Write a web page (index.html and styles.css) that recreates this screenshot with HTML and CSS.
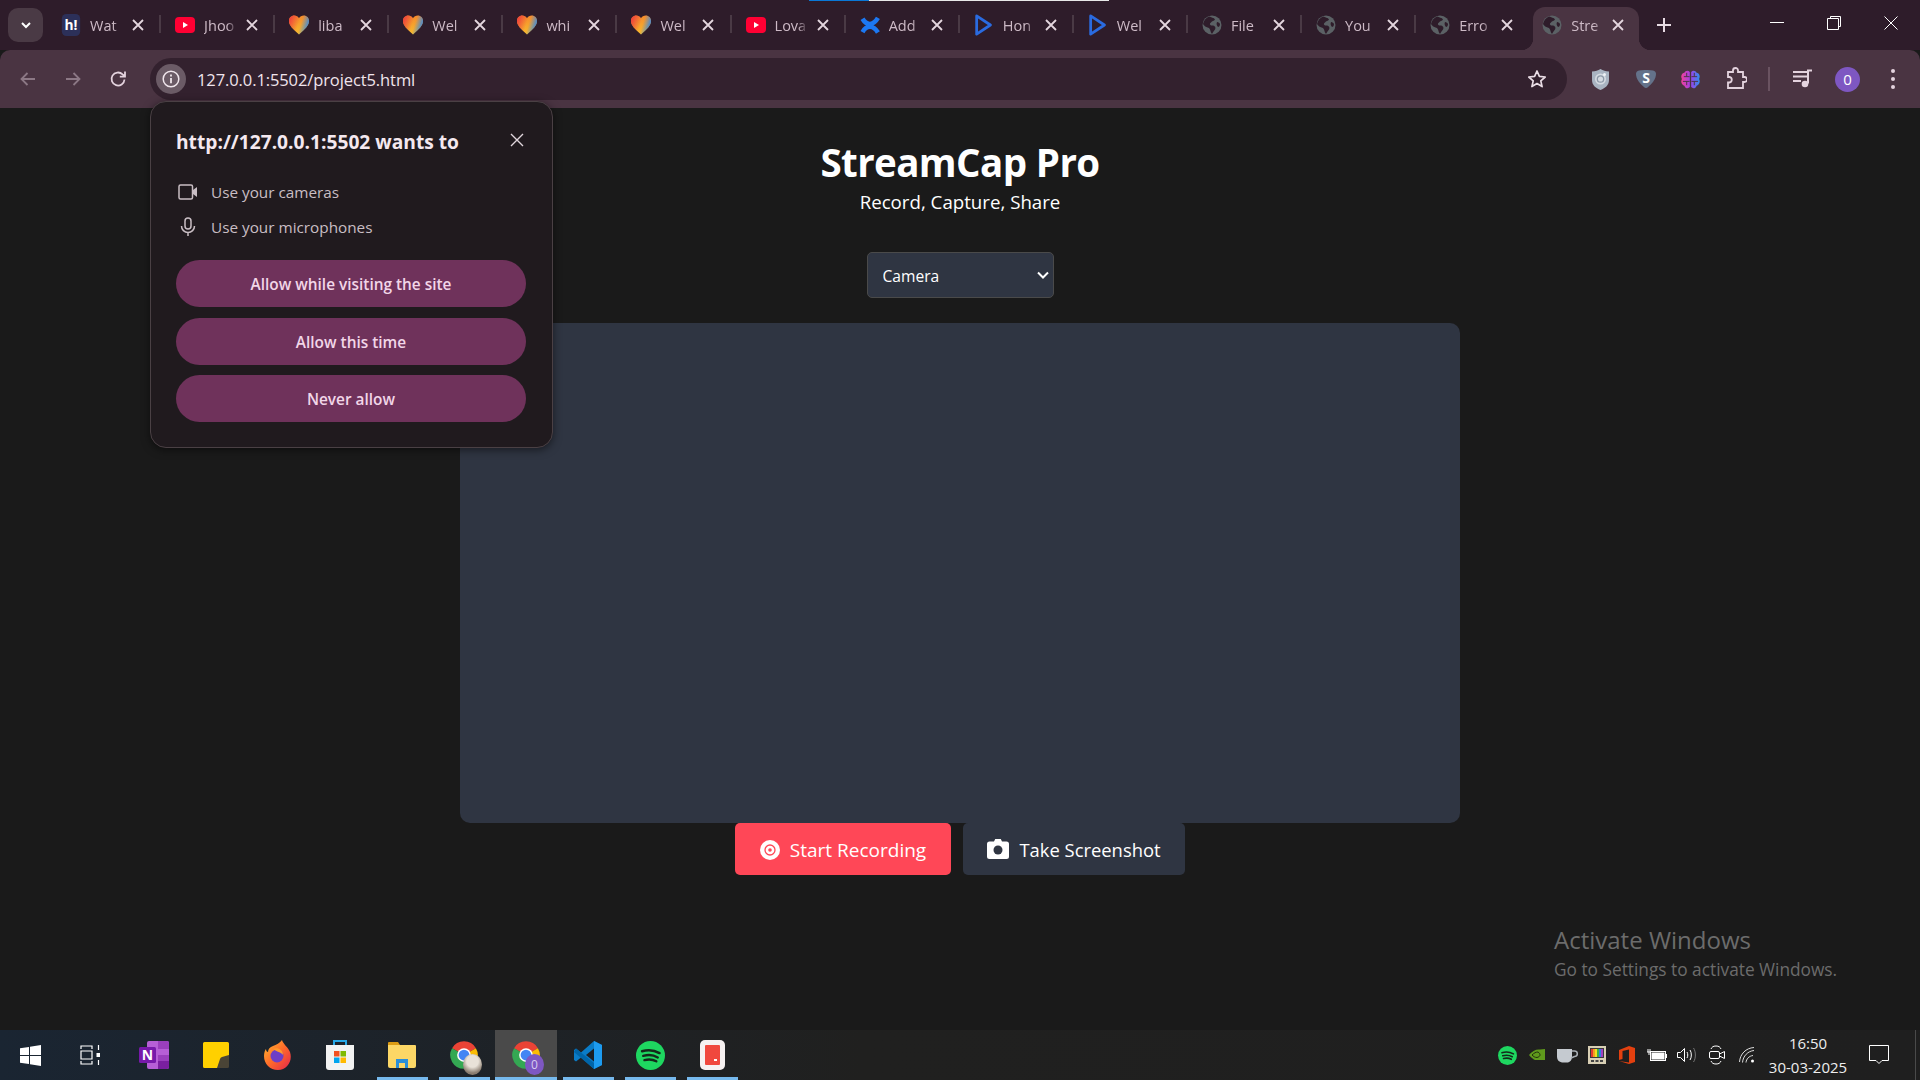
FILE: index.html
```html
<!DOCTYPE html>
<html lang="en">
<head>
    <meta charset="UTF-8">
    <title>StreamCap Pro</title>
    <link rel="stylesheet" href="styles.css">
</head>
<body>
<svg class="defs" width="0" height="0">
    <symbol id="i-x" viewBox="0 0 16 16"><path d="M3 3l10 10M13 3L3 13" fill="none" stroke="currentColor" stroke-width="1.800"/></symbol>
    <symbol id="i-hi" viewBox="0 0 20 24"><rect width="20" height="24" rx="5" fill="#2c3059"/><text x="10" y="17.500" text-anchor="middle" class="svg-bold" font-size="15" fill="#fff">h!</text></symbol>
    <symbol id="i-yt" viewBox="0 0 20 20"><rect y="2" width="20" height="16" rx="4" fill="#ff0033"/><path d="M8 7l5 3-5 3z" fill="#fff"/></symbol>
    <symbol id="i-heart" viewBox="0 0 20 20">
        <defs>
            <linearGradient id="hg" x1="0" y1="0" x2="0" y2="1"><stop offset="0" stop-color="#f58a2c"/><stop offset="1" stop-color="#f7bb2e"/></linearGradient>
            <linearGradient id="hs" x1="0" y1=".2" x2="1" y2=".5"><stop offset="0" stop-color="#ef3f3c"/><stop offset=".5" stop-color="#ef3f3c" stop-opacity="0"/><stop offset=".6" stop-color="#3f8fe0" stop-opacity="0"/><stop offset="1" stop-color="#2f86e6"/></linearGradient>
        </defs>
        <path d="M10 19.500C4 14 0 10.500 0 6 0 2.800 2.300.5 5.300.5 7.200.5 9 1.500 10 3.200 11 1.500 12.800.5 14.700.5 17.700.5 20 2.800 20 6 20 10.500 16 14 10 19.500z" fill="url(#hg)"/>
        <path d="M10 19.500C4 14 0 10.500 0 6 0 2.800 2.300.5 5.300.5 7.200.5 9 1.500 10 3.200 11 1.500 12.800.5 14.700.5 17.700.5 20 2.800 20 6 20 10.500 16 14 10 19.500z" fill="url(#hs)"/>
    </symbol>
    <symbol id="i-conf" viewBox="0 0 24 24"><path d="M3 4.500C8 13 16 13 21.500 3.500M3 20.500C8 12 16 12 21.500 21" fill="none" stroke="#1c78f2" stroke-width="5.500"/></symbol>
    <symbol id="i-play" viewBox="0 0 20 24"><path d="M2 2l15 10L2 22z" fill="none" stroke="#2a6be0" stroke-width="3" stroke-linejoin="round"/></symbol>
    <symbol id="i-globe" viewBox="0 0 20 20"><circle cx="10" cy="10" r="9.500" fill="#5b6165"/><path d="M7 1.500c2 1 5 1 6 3-1 2-3 1-4 3-2 1-1 3 1 3 3 0 4 2 3 4-1 1-2 3-3 4.500-2-2-1-4-3-6-3-1-5-2-6-4 1-4 3-6 6-7.500zM15 7c1.500 0 2.500 1 3 2 0 2-1 3-2 3-1-1-2-3-1-5z" fill="#2e1c2a"/></symbol>
    <symbol id="i-chrome" viewBox="0 0 24 24">
        <path d="M12 12L2.470 6.500A11 11 0 0 1 21.530 6.500Z" fill="#ea4335"/>
        <path d="M12 12L21.530 6.500A11 11 0 0 1 12 23Z" fill="#fbbc04"/>
        <path d="M12 12L12 23A11 11 0 0 1 2.470 6.500Z" fill="#34a853"/>
        <circle cx="12" cy="12" r="5.500" fill="#fff"/><circle cx="12" cy="12" r="4.300" fill="#4285f4"/>
    </symbol>
    <symbol id="i-spotify" viewBox="0 0 24 24"><circle cx="12" cy="12" r="12" fill="#1ed760"/><path d="M5 8.500c5-1.500 10-1 14.500 1.500M6 12.300c4.500-1.200 8.500-.8 12 1.300M7 15.800c3.500-.9 7-.6 9.800 1" fill="none" stroke="#14291b" stroke-width="2" stroke-linecap="round"/></symbol>
</svg>

<div class="strip">
    <div class="load-line"></div>
    <button class="tab-menu"><svg width="14" height="14" viewBox="0 0 14 14"><path d="M3 5l4 4 4-4" fill="none" stroke="#fff" stroke-width="2"/></svg></button>
    <div class="tabs">
        <div class="tab"><svg class="fav"><use href="#i-hi"/></svg><span class="tab-title">Wat</span><svg class="tab-x"><use href="#i-x"/></svg></div><i class="sep"></i>
        <div class="tab"><svg class="fav"><use href="#i-yt"/></svg><span class="tab-title">Jhoo</span><svg class="tab-x"><use href="#i-x"/></svg></div><i class="sep"></i>
        <div class="tab"><svg class="fav"><use href="#i-heart"/></svg><span class="tab-title">liba</span><svg class="tab-x"><use href="#i-x"/></svg></div><i class="sep"></i>
        <div class="tab"><svg class="fav"><use href="#i-heart"/></svg><span class="tab-title">Wel</span><svg class="tab-x"><use href="#i-x"/></svg></div><i class="sep"></i>
        <div class="tab"><svg class="fav"><use href="#i-heart"/></svg><span class="tab-title">whi</span><svg class="tab-x"><use href="#i-x"/></svg></div><i class="sep"></i>
        <div class="tab"><svg class="fav"><use href="#i-heart"/></svg><span class="tab-title">Wel</span><svg class="tab-x"><use href="#i-x"/></svg></div><i class="sep"></i>
        <div class="tab"><svg class="fav"><use href="#i-yt"/></svg><span class="tab-title">Lova</span><svg class="tab-x"><use href="#i-x"/></svg></div><i class="sep"></i>
        <div class="tab"><svg class="fav"><use href="#i-conf"/></svg><span class="tab-title">Add</span><svg class="tab-x"><use href="#i-x"/></svg></div><i class="sep"></i>
        <div class="tab"><svg class="fav"><use href="#i-play"/></svg><span class="tab-title">Hon</span><svg class="tab-x"><use href="#i-x"/></svg></div><i class="sep"></i>
        <div class="tab"><svg class="fav"><use href="#i-play"/></svg><span class="tab-title">Wel</span><svg class="tab-x"><use href="#i-x"/></svg></div><i class="sep"></i>
        <div class="tab"><svg class="fav"><use href="#i-globe"/></svg><span class="tab-title">File</span><svg class="tab-x"><use href="#i-x"/></svg></div><i class="sep"></i>
        <div class="tab"><svg class="fav"><use href="#i-globe"/></svg><span class="tab-title">You</span><svg class="tab-x"><use href="#i-x"/></svg></div><i class="sep"></i>
        <div class="tab"><svg class="fav"><use href="#i-globe"/></svg><span class="tab-title">Erro</span><svg class="tab-x"><use href="#i-x"/></svg></div>
        <div class="tab active"><svg class="fav"><use href="#i-globe"/></svg><span class="tab-title">Stre</span><svg class="tab-x"><use href="#i-x"/></svg></div>
    </div>
    <button class="new-tab"><svg width="16" height="16" viewBox="0 0 16 16"><path d="M8 1v14M1 8h14" stroke="#e8dce4" stroke-width="2"/></svg></button>
    <div class="win-btns">
        <button class="win-btn"><svg width="14" height="14" viewBox="0 0 14 14"><path d="M0 6.500h14" stroke="#fff"/></svg></button>
        <button class="win-btn"><svg width="14" height="14" viewBox="0 0 14 14"><path d="M3.500 2.500V.5h10v10h-2M.5 2.500h11v11H.5z" fill="none" stroke="#fff"/></svg></button>
        <button class="win-btn"><svg width="14" height="14" viewBox="0 0 14 14"><path d="M.5.5l13 13M13.500.5l-13 13" fill="none" stroke="#fff"/></svg></button>
    </div>
</div>

<div class="toolbar">
    <button class="tb-btn dim"><svg width="20" height="20" viewBox="0 0 20 20"><path d="M17 10H4M9.500 4L3.500 10l6 6" fill="none" stroke="currentColor" stroke-width="1.800"/></svg></button>
    <button class="tb-btn dim"><svg width="20" height="20" viewBox="0 0 20 20"><path d="M3 10h13M10.500 4l6 6-6 6" fill="none" stroke="currentColor" stroke-width="1.800"/></svg></button>
    <button class="tb-btn"><svg width="20" height="20" viewBox="0 0 20 20"><path d="M16.500 10.500A6.500 6.500 0 1 1 14.600 5.400L17 7.500M17 2.500v5.200h-5.200" fill="none" stroke="currentColor" stroke-width="1.800"/></svg></button>
    <div class="omnibox">
        <span class="site-info"><svg width="18" height="18" viewBox="0 0 18 18"><circle cx="9" cy="9" r="7.800" fill="none" stroke="#f0e6ec" stroke-width="1.500"/><path d="M9 8v5.200M9 4.600v1.800" stroke="#f0e6ec" stroke-width="1.800"/></svg></span>
        <span class="url">127.0.0.1:5502/project5.html</span>
        <svg class="star" width="20" height="20" viewBox="0 0 20 20"><path d="M10 2l2.400 5.400 5.800.6-4.400 3.900 1.300 5.700L10 14.600l-5.100 3 1.300-5.700L1.800 8l5.800-.6z" fill="none" stroke="#eadde5" stroke-width="1.700" stroke-linejoin="round"/></svg>
    </div>
    <div class="tb-right">
        <button class="tb-btn"><svg width="17" height="21" viewBox="0 0 17 21"><path d="M8.500 0c2.500 1.500 5 2.200 8.500 2.500V11c0 5-3.500 8-8.500 10C3.500 19 0 16 0 11V2.500C3.500 2.200 6 1.500 8.500 0z" fill="#a9b4c2"/><circle cx="8.500" cy="10" r="5.500" fill="#d5dbe2"/><circle cx="8.500" cy="10" r="3.200" fill="none" stroke="#8d99a8" stroke-width="1.300"/><circle cx="12.500" cy="5.500" r="1.500" fill="#eef2f6"/></svg></button>
        <button class="tb-btn"><svg width="20" height="18" viewBox="0 0 20 18"><path d="M3 .5C7 -.2 13 -.2 17 .5c2 .4 3 1.500 3 3.500 0 5-4 10-8.500 13.500-1 .7-2 .7-3 0C4 14 0 9 0 4 0 2 1 .9 3 .5z" fill="#64728a"/><text x="10" y="13" text-anchor="middle" class="svg-bold" font-size="14" fill="#fff">S</text></svg></button>
        <button class="tb-btn"><svg width="21" height="19" viewBox="0 0 22 20"><defs><linearGradient id="bg" x1="0" x2="1" y1="0" y2="0"><stop offset="0" stop-color="#f0409a"/><stop offset=".5" stop-color="#a040e8"/><stop offset="1" stop-color="#2f8ff0"/></linearGradient></defs><path d="M10.300 2C8.500 0 5.500.5 4.500 3 1.500 3.500.5 7 2 9.500c-1.500 2.500-.5 6 2.500 7 1 3 4 3.500 5.800 1.500zM11.700 2c1.800-2 4.800-1.500 5.800 1 3 .5 4 4 2.500 6.500 1.500 2.500.5 6-2.500 7-1 3-4 3.500-5.800 1.500z" fill="url(#bg)"/><path d="M4 7h6M3 12h7M12 7h6M12 12h7M7 3v4M15 3v4M7 12v4M15 12v4" stroke="#4a3442" stroke-width="1"/></svg></button>
        <button class="tb-btn"><svg width="22" height="24" viewBox="0 0 22 24"><path d="M3 5h5V3.500a2.500 2.500 0 0 1 5 0V5h5v5h1.500a2.500 2.500 0 0 1 0 5H18v6H3v-5.500h1.500a2.800 2.800 0 0 0 0-5.500H3z" fill="none" stroke="currentColor" stroke-width="1.800"/></svg></button>
        <i class="tb-sep"></i>
        <button class="tb-btn"><svg width="22" height="20" viewBox="0 0 22 20"><path d="M1 3h14M1 7.500h14M1 12h8" stroke="currentColor" stroke-width="2"/><path d="M16 14.500V1.500h4" fill="none" stroke="currentColor" stroke-width="2"/><circle cx="13" cy="15" r="3.300" fill="currentColor"/></svg></button>
        <button class="tb-btn"><span class="avatar">0</span></button>
        <button class="tb-btn"><svg width="6" height="22" viewBox="0 0 6 22"><circle cx="3" cy="3" r="2" fill="currentColor"/><circle cx="3" cy="11" r="2" fill="currentColor"/><circle cx="3" cy="19" r="2" fill="currentColor"/></svg></button>
    </div>
</div>

<div class="main">
    <h1 class="title">StreamCap Pro</h1>
    <p class="subtitle">Record, Capture, Share</p>
    <div class="source-wrap">
        <select class="source">
            <option>Camera</option>
            <option>Screen</option>
        </select>
        <svg class="source-arrow" width="12" height="8" viewBox="0 0 12 8"><path d="M1 1.500l5 5 5-5" fill="none" stroke="#fff" stroke-width="2"/></svg>
    </div>
    <div class="video"></div>
    <div class="controls">
        <button class="btn btn-rec"><svg width="20" height="20" viewBox="0 0 20 20"><circle cx="10" cy="10" r="10" fill="#fff"/><circle cx="10" cy="10" r="5" fill="none" stroke="#ff4757" stroke-width="1.300"/><circle cx="10" cy="10" r="1.800" fill="#ff4757"/></svg>Start Recording</button>
        <button class="btn btn-shot"><svg width="22" height="20" viewBox="0 0 22 20"><path d="M7 2.500L8.200 0h5.600L15 2.500h4.500A2.500 2.500 0 0 1 22 5v12.500a2.500 2.500 0 0 1-2.500 2.500h-17A2.500 2.500 0 0 1 0 17.500V5a2.500 2.500 0 0 1 2.500-2.500z" fill="#fff"/><circle cx="11" cy="11" r="4.500" fill="#2f3542"/></svg>Take Screenshot</button>
    </div>

    <div class="activate">
        <div class="activate-head">Activate Windows</div>
        <div class="activate-sub">Go to Settings to activate Windows.</div>
    </div>
</div>

<div class="taskbar">
    <div class="task-left">
        <div class="task-fixed"><svg width="21" height="21" viewBox="0 0 21 21"><path d="M0 3.200L9 1.900v8H0zM10 1.700L21 0v9.900H10zM0 11h9v8.100l-9-1.300zM10 11h11v10l-11-1.700z" fill="#fff"/></svg></div>
        <div class="task-fixed"><svg width="20" height="20" viewBox="0 0 20 20"><path d="M1 4V1h11v3M1 16v3h11v-3M1 6h11v8H1zM18.500 0v5M18.500 15v5" fill="none" stroke="#fff" stroke-width="1.200"/><rect x="16.500" y="8" width="4" height="4" fill="#fff"/></svg></div>
        <div class="task-item"><svg width="30" height="28" viewBox="0 0 30 28"><rect x="8" y="0" width="22" height="28" rx="2" fill="#b65fd6"/><path d="M19 0h9a2 2 0 0 1 2 2v6H19zM19 14h11v6H19z" fill="#9a3fbd"/><path d="M19 20h11v6a2 2 0 0 1-2 2h-9z" fill="#7a1fa0"/><rect y="6" width="17" height="16" rx="1.500" fill="#7719aa"/><text x="8.500" y="19" text-anchor="middle" class="svg-bold" font-size="14" fill="#fff">N</text></svg></div>
        <div class="task-item"><svg width="26" height="26" viewBox="0 0 26 26"><path d="M1.500 0h23A1.500 1.500 0 0 1 26 1.500V15L15 26H1.500A1.500 1.500 0 0 1 0 24.500V1.500A1.500 1.500 0 0 1 1.500 0z" fill="#ffd000"/><path d="M26 13v11.500a1.500 1.500 0 0 1-1.500 1.500H14l3-9a3 3 0 0 1 2-2z" fill="#4a4436"/></svg></div>
        <div class="task-item"><svg width="28" height="30" viewBox="0 0 28 30"><defs><linearGradient id="ff" x1="0" x2="1" y1="0" y2="1"><stop offset="0" stop-color="#ffbd2e"/><stop offset=".5" stop-color="#ff6a2a"/><stop offset="1" stop-color="#e3234c"/></linearGradient></defs><path d="M18 0c1 4 6 7 8 12 3 9-3 18-12 18C6 30 0 24 0 16c0-3 1-6 2-7 0 2 1 3 2 3 0-3 2-5 5-6 3-1 7-3 9-6z" fill="url(#ff)"/><circle cx="13" cy="16" r="6.500" fill="#6e3fc7"/><path d="M9 9c4-2 10 0 10 6-2-3-6-3-10-6z" fill="#ff9a2e"/></svg></div>
        <div class="task-item"><svg width="28" height="30" viewBox="0 0 28 30"><path d="M8 5V1h12v4" fill="none" stroke="#27a8e8" stroke-width="2"/><path d="M0 5h28v22a3 3 0 0 1-3 3H3a3 3 0 0 1-3-3z" fill="#f2f2f2"/><rect x="8" y="11" width="5.500" height="5.500" fill="#f25022"/><rect x="14.500" y="11" width="5.500" height="5.500" fill="#7fba00"/><rect x="8" y="17.500" width="5.500" height="5.500" fill="#00a4ef"/><rect x="14.500" y="17.500" width="5.500" height="5.500" fill="#ffb900"/></svg></div>
        <div class="task-item running"><svg width="28" height="26" viewBox="0 0 28 26"><path d="M0 1a1 1 0 0 1 1-1h9l2 3h0H0z" fill="#dc9c14"/><path d="M0 3h27a1 1 0 0 1 1 1v20a2 2 0 0 1-2 2H2a2 2 0 0 1-2-2z" fill="#fcd766"/><path d="M8 26v-9h12v9h-3v-5h-6v5z" fill="#2b8fd8"/></svg></div>
        <div class="task-item running"><span class="chrome-badge"><svg width="30" height="30"><use href="#i-chrome"/></svg><span class="badge badge-photo"></span></span></div>
        <div class="task-item running current"><span class="chrome-badge"><svg width="30" height="30"><use href="#i-chrome"/></svg><span class="badge badge-o">0</span></span></div>
        <div class="task-item running"><svg width="30" height="30" viewBox="0 0 30 30"><path d="M21 1L29 5v20l-8 4L8 17.500 3 21.500 1 20V10l2-1.500 5 4z" fill="#0a7cc8"/><path d="M21 1l8 4v20l-8 4z" fill="#1d9bf0"/><path d="M21 8.500L13 15l8 6.500z" fill="#1b1f24"/><path d="M3 8.500L21 23v6L1 12z" fill="#0065a9"/></svg></div>
        <div class="task-item running"><svg width="29" height="29"><use href="#i-spotify"/></svg></div>
        <div class="task-item running"><svg width="25" height="30" viewBox="0 0 25 30"><rect width="25" height="30" rx="5" fill="#f6f1f1"/><rect x="5" y="5" width="15" height="20" rx="1" fill="#f0483e"/><rect x="14" y="19" width="3" height="2" fill="#fff"/></svg></div>
    </div>
    <div class="tray">
        <span class="tray-item"><svg width="19" height="19"><use href="#i-spotify"/></svg></span>
        <span class="tray-item"><svg width="16" height="12" viewBox="0 0 16 12"><path d="M0 6c3-4 7-6 11-5.500L16 0v11H6C4 10 2 8.500 0 6z" fill="#5f9a1c"/><path d="M3 6c2-2 4-3 6-3 1.500 1 2 2 2 3s-1 2-3 2.500C6 8.500 4.500 7.500 3 6z" fill="none" stroke="#22300c"/></svg></span>
        <span class="tray-item"><svg width="21" height="15" viewBox="0 0 21 15"><path d="M0 1h15v8c0 3-2 5-4 5.500H5C2 14 0 12 0 9z" fill="#c5cad0"/><path d="M15 3h2.500a2.800 2.800 0 0 1 0 5.600L14 10" fill="none" stroke="#aab0b6" stroke-width="1.500"/></svg></span>
        <span class="tray-item"><svg width="18" height="18" viewBox="0 0 18 18"><rect width="18" height="18" fill="#d8cfb4"/><rect x="2" y="2" width="14" height="10" fill="#3a3a3a"/><path d="M3 3h2v8H3z" fill="#e23b2e"/><path d="M5 3h2v8H5z" fill="#f0a020"/><path d="M7 3h2v8H7z" fill="#f5e020"/><path d="M9 3h2v8H9z" fill="#40b040"/><path d="M11 3h2v8h-2z" fill="#2f7fe0"/><path d="M13 3h2v8h-2z" fill="#a040c0"/><rect x="3" y="14" width="3" height="2" fill="#444"/><rect x="7.500" y="14" width="3" height="2" fill="#444"/><rect x="12" y="14" width="3" height="2" fill="#444"/></svg></span>
        <span class="tray-item"><svg width="16" height="18" viewBox="0 0 16 18"><path d="M0 4L10 0l6 2v14l-6 2-10-3 10 1.500V3.500L3.500 5v8L0 14z" fill="#e3400f"/></svg></span>
        <span class="tray-item"><svg width="20" height="14" viewBox="0 0 20 14"><rect x="3.500" y="3.500" width="15" height="9" fill="none" stroke="#fff"/><rect x="4.500" y="4.500" width="13" height="7" fill="#fff"/><rect x="19" y="6" width="1" height="4" fill="#fff"/><path d="M0 4h3M1 1v3M3 1v3M2 4v3" stroke="#fff"/></svg></span>
        <span class="tray-item"><svg width="21" height="16" viewBox="0 0 21 16"><path d="M.5 5.500h3l4-4v13l-4-4h-3z" fill="none" stroke="#fff"/><path d="M10 5c1 1.500 1 4.500 0 6M13 3c1.800 2.500 1.800 7.500 0 10" fill="none" stroke="#fff"/><path d="M16.500 1c2.500 3.500 2.500 10.500 0 14" fill="none" stroke="#777"/></svg></span>
        <span class="tray-item"><svg width="16" height="20" viewBox="0 0 16 20"><path d="M2 4c1-2 2-3 5-3s4 1 5 3M2 16c1 2 2 3 5 3s4-1 5-3" fill="none" stroke="#fff"/><rect x=".5" y="6.500" width="10" height="7" rx="1.500" fill="none" stroke="#fff"/><path d="M10.500 9l5-2.500v7l-5-2.500" fill="none" stroke="#fff"/></svg></span>
        <span class="tray-item"><svg width="16" height="16" viewBox="0 0 16 16"><path d="M.5 15C1 7 7 1 15 .5M3.500 15.500C4 9 9 4 15 3.500M7 15.500c.3-3.500 3-6.500 7-7" fill="none" stroke="#ddd"/><circle cx="13.500" cy="14" r="1.500" fill="#fff"/></svg></span>
        <div class="clock"><div>16:50</div><div>30-03-2025</div></div>
        <span class="notify"><svg width="20" height="20" viewBox="0 0 20 20"><path d="M.5.5h19v15h-6.500L10 18.500 7 15.500H.5z" fill="none" stroke="#fff"/></svg></span>
        <span class="show-desk"></span>
    </div>
</div>

<div class="popup">
    <div class="popup-head">
        <span class="popup-title">http://127.0.0.1:5502 wants to</span>
        <svg class="popup-close" width="14" height="14" viewBox="0 0 14 14"><path d="M1 1l12 12M13 1L1 13" fill="none" stroke="#e0d6dc" stroke-width="1.400"/></svg>
    </div>
    <div class="perm">
        <span class="perm-icon"><svg width="20" height="16" viewBox="0 0 20 16"><rect x="1" y="1" width="13.500" height="14" rx="1.500" fill="none" stroke="#c9bec4" stroke-width="1.500"/><path d="M15 6l4-3v10l-4-3z" fill="#c9bec4"/></svg></span>
        Use your cameras
    </div>
    <div class="perm">
        <span class="perm-icon"><svg width="16" height="20" viewBox="0 0 16 20"><rect x="5" y="1" width="6" height="11" rx="3" fill="none" stroke="#c9bec4" stroke-width="1.500"/><path d="M1.500 9a6.500 6.500 0 0 0 13 0M8 15.500V19" fill="none" stroke="#c9bec4" stroke-width="1.500"/></svg></span>
        Use your microphones
    </div>
    <div class="popup-btns">
        <button class="popup-btn">Allow while visiting the site</button>
        <button class="popup-btn">Allow this time</button>
        <button class="popup-btn">Never allow</button>
    </div>
</div>
</body>
</html>
```

FILE: styles.css
```css
*{
    margin: 0;
    padding: 0;
    box-sizing: border-box;
}
html, body{
    width: 1920px;
    height: 1080px;
    overflow: hidden;
}
body{
    display: flex;
    flex-direction: column;
    position: relative;
    background: #1a1a1a;
    color: #fff;
    font-family: "Open Sans", "Noto Sans", sans-serif;
}
button{
    border: 0;
    background: none;
    color: inherit;
    font-family: inherit;
}
svg{
    display: block;
}
.defs{
    position: absolute;
}
.svg-bold{
    font-family: "Open Sans", sans-serif;
    font-weight: 700;
}

/* tab strip */
.strip{
    height: 50px;
    flex: none;
    display: flex;
    position: relative;
    background: #2e1c2a;
}
.load-line{
    position: absolute;
    left: 809px;
    top: 0;
    width: 300px;
    height: 1px;
    background: linear-gradient(to right, #0a78d7 60px, #e8e8e8 60px);
}
.tab-menu{
    width: 35px;
    height: 34px;
    margin: 8px 4px 0 8px;
    border-radius: 10px;
    background: #4a3a45;
    display: flex;
    align-items: center;
    justify-content: center;
}
.tabs{
    display: flex;
    align-items: flex-start;
}
.tab{
    width: 112.1px;
    height: 50px;
    padding-left: 14px;
    display: flex;
    align-items: center;
    color: #cdbac6;
    font-size: 14.5px;
}
.sep{
    width: 2px;
    height: 18px;
    margin-top: 15px;
    background: #4a3a45;
}
.fav{
    width: 20px;
    height: 22px;
    flex: none;
}
.tab-title{
    width: 33px;
    margin-left: 9px;
    white-space: nowrap;
    -webkit-mask-image: linear-gradient(to right, #000 70%, transparent);
    mask-image: linear-gradient(to right, #000 70%, transparent);
}
.tab-x{
    width: 16px;
    height: 16px;
    margin-left: 7px;
    flex: none;
    color: #e4d6de;
}
.tab.active{
    width: 106px;
    height: 43px;
    margin: 7px 3.100px 0 5px;
    padding: 0 0 7px 9px;
    background: #4a3442;
    border-radius: 12px 12px 0 0;
    position: relative;
}
.tab.active .tab-x{
    margin-left: 6px;
}
.tab.active::before,
.tab.active::after{
    content: "";
    position: absolute;
    bottom: 0;
    width: 12px;
    height: 12px;
}
.tab.active::before{
    left: -12px;
    background: radial-gradient(circle at 0 0, transparent 12px, #4a3442 12.5px);
}
.tab.active::after{
    right: -12px;
    background: radial-gradient(circle at 100% 0, transparent 12px, #4a3442 12.5px);
}
.new-tab{
    width: 42px;
    height: 50px;
    padding-left: 2px;
    display: flex;
    align-items: center;
    justify-content: center;
}
.win-btns{
    display: flex;
    margin-left: auto;
    padding-right: 1px;
}
.win-btn{
    width: 57px;
    height: 46px;
    display: flex;
    align-items: center;
    justify-content: center;
}

/* toolbar */
.toolbar{
    height: 58px;
    flex: none;
    display: flex;
    align-items: center;
    padding-left: 5px;
    background: #4a3442;
    border-radius: 10px 10px 0 0;
    color: #e4d3de;
}
.tb-btn{
    width: 45px;
    height: 42px;
    flex: none;
    display: flex;
    align-items: center;
    justify-content: center;
}
.tb-btn.dim{
    color: #8c7885;
}
.omnibox{
    width: 1417px;
    height: 42px;
    margin-left: 10px;
    padding: 0 20px 0 6px;
    display: flex;
    align-items: center;
    border-radius: 21px;
    background: #33212e;
}
.site-info{
    width: 30px;
    height: 30px;
    border-radius: 50%;
    background: #6b5b66;
    display: flex;
    align-items: center;
    justify-content: center;
}
.url{
    margin-left: 11px;
    font-size: 16.500px;
    letter-spacing: -.1px;
    color: #f0e4ec;
}
.star{
    margin-left: auto;
}
.tb-right{
    display: flex;
    align-items: center;
    margin-left: 11px;
}
.tb-sep{
    width: 2px;
    height: 24px;
    margin: 0 10px;
    background: #6a5361;
}
.avatar{
    width: 25px;
    height: 25px;
    border-radius: 50%;
    background: #7e57c2;
    color: #fff;
    font-size: 15px;
    line-height: 25px;
    text-align: center;
}

/* page */
.main{
    flex: 1;
    display: flex;
    flex-direction: column;
    align-items: center;
    padding-top: 30px;
    position: relative;
}
.title{
    height: 48px;
    font-size: 38.500px;
    line-height: 48px;
    font-weight: 700;
    letter-spacing: -.6px;
}
.subtitle{
    height: 26px;
    margin-top: 3px;
    font-size: 18.700px;
    line-height: 26px;
}
.source-wrap{
    margin-top: 37px;
    position: relative;
}
.source{
    display: block;
    width: 187px;
    height: 46px;
    padding: 1px 0 0 15px;
    border: 1px solid #4a4a4a;
    border-radius: 5px;
    background: #2f3542;
    color: #fff;
    font-family: inherit;
    font-size: 15.600px;
    appearance: none;
}
.source-arrow{
    position: absolute;
    right: 5px;
    top: 19px;
}
.video{
    width: 1000px;
    height: 500px;
    margin-top: 25px;
    border-radius: 10px;
    background: #2f3542;
}
.controls{
    display: flex;
    gap: 12px;
}
.btn{
    height: 52px;
    display: flex;
    align-items: center;
    justify-content: center;
    gap: 10px;
    border-radius: 5px;
    font-size: 19px;
    color: #fff;
}
.btn-rec{
    width: 216px;
    padding-top: 1px;
    background: #ff4757;
}
.btn-shot{
    width: 222px;
    background: #2f3542;
    font-size: 18.400px;
}
.activate{
    position: absolute;
    left: 1554px;
    top: 816px;
    color: #6c6c6c;
}
.activate-head{
    font-size: 24px;
    line-height: 32px;
}
.activate-sub{
    margin-top: 1px;
    font-size: 17.300px;
    line-height: 26px;
}

/* taskbar */
.taskbar{
    height: 50px;
    flex: none;
    display: flex;
    justify-content: space-between;
    background: linear-gradient(to right, #1a2532, #20201f 45%, #1f1f1f);
}
.task-left{
    display: flex;
}
.task-fixed{
    width: 60px;
    display: flex;
    align-items: center;
    justify-content: center;
}
.task-fixed + .task-item{
    margin-left: 3px;
}
.task-item{
    width: 62px;
    display: flex;
    align-items: center;
    justify-content: center;
}
.task-item.running{
    background: linear-gradient(#76b9ed, #76b9ed) center bottom / 51px 3px no-repeat;
}
.task-item.current{
    background: linear-gradient(#76b9ed, #76b9ed) center bottom / 100% 3px no-repeat, #4a4a4a;
}
.chrome-badge{
    width: 30px;
    height: 30px;
    position: relative;
}
.badge{
    position: absolute;
    right: -3px;
    bottom: -5px;
    width: 19px;
    height: 21px;
    border-radius: 50%;
}
.badge-o{
    background: #7e57c2;
    color: #d8ccf0;
    font-size: 12px;
    line-height: 21px;
    text-align: center;
}
.badge-photo{
    background: radial-gradient(circle at 50% 35%, #e9e2d8 35%, #8a7d70 70%);
}
.tray{
    display: flex;
    align-items: center;
}
.tray-item{
    width: 30px;
    display: flex;
    justify-content: center;
}
.clock{
    width: 92px;
    font-size: 15px;
    line-height: 24px;
    text-align: center;
    color: #eee;
}
.notify{
    width: 50px;
    display: flex;
    justify-content: center;
}
.show-desk{
    width: 16px;
    height: 50px;
    background: linear-gradient(#4a4a4a, #4a4a4a) 11px 0 / 1px 100% no-repeat;
}

/* permission popup */
.popup{
    position: absolute;
    left: 150px;
    top: 101px;
    width: 403px;
    padding: 25px 26px 25px 25px;
    border: 1px solid #4a4044;
    border-radius: 16px;
    background: #201a1e;
    box-shadow: 0 2px 8px rgba(0, 0, 0, .5);
}
.popup-head{
    height: 28px;
    display: flex;
    align-items: center;
    justify-content: space-between;
}
.popup-title{
    font-size: 19.200px;
    font-weight: 700;
    color: #f4e8ef;
}
.popup-close{
    margin: -2px 2px 0 0;
}
.perm{
    height: 35px;
    display: flex;
    align-items: center;
    gap: 11px;
    font-size: 15.300px;
    color: #c9bec4;
}
.popup-head + .perm{
    margin-top: 19px;
}
.perm-icon{
    width: 24px;
    display: flex;
    justify-content: center;
}
.popup-btns{
    display: flex;
    flex-direction: column;
    gap: 10.500px;
    margin-top: 16px;
}
.popup-btn{
    height: 47px;
    padding-top: 2px;
    border-radius: 24px;
    background: #6f325b;
    color: #f2d6e8;
    font-size: 15.400px;
    font-weight: 600;
}
```
